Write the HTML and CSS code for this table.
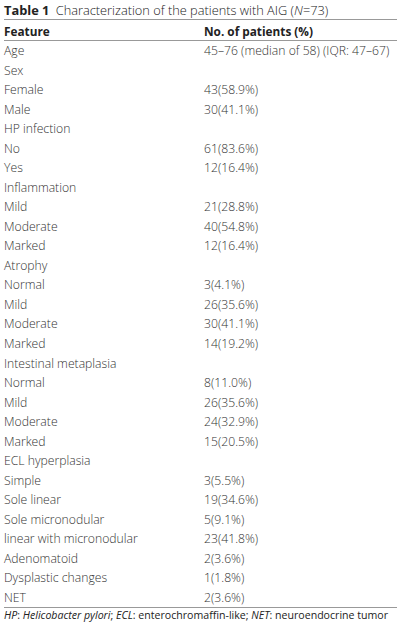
FILE: index.html
```html
<!DOCTYPE html>
<html lang="en">
<head>
    <meta charset="UTF-8">
    <meta name="viewport" content="width=device-width, initial-scale=1.0">
    <title>Table 1</title>
    <link rel="stylesheet" href="styles.css">
</head>
<body>
    <div class="caption"><b>Table 1</b> Characterization of the patients with AIG (<i>N</i>=73)</div>
    <table class="data">
        <thead>
            <tr><th>Feature</th><th>No. of patients (%)</th></tr>
        </thead>
        <tbody>
            <tr><td>Age</td><td>45–76 (median of 58) (IQR: 47–67)</td></tr>
            <tr><td>Sex</td><td></td></tr>
            <tr><td>Female</td><td>43(58.9%)</td></tr>
            <tr><td>Male</td><td>30(41.1%)</td></tr>
            <tr><td>HP infection</td><td></td></tr>
            <tr><td>No</td><td>61(83.6%)</td></tr>
            <tr><td>Yes</td><td>12(16.4%)</td></tr>
            <tr><td>Inflammation</td><td></td></tr>
            <tr><td>Mild</td><td>21(28.8%)</td></tr>
            <tr><td>Moderate</td><td>40(54.8%)</td></tr>
            <tr><td>Marked</td><td>12(16.4%)</td></tr>
            <tr><td>Atrophy</td><td></td></tr>
            <tr><td>Normal</td><td>3(4.1%)</td></tr>
            <tr><td>Mild</td><td>26(35.6%)</td></tr>
            <tr><td>Moderate</td><td>30(41.1%)</td></tr>
            <tr><td>Marked</td><td>14(19.2%)</td></tr>
            <tr><td>Intestinal metaplasia</td><td></td></tr>
            <tr><td>Normal</td><td>8(11.0%)</td></tr>
            <tr><td>Mild</td><td>26(35.6%)</td></tr>
            <tr><td>Moderate</td><td>24(32.9%)</td></tr>
            <tr><td>Marked</td><td>15(20.5%)</td></tr>
            <tr><td>ECL hyperplasia</td><td></td></tr>
            <tr><td>Simple</td><td>3(5.5%)</td></tr>
            <tr><td>Sole linear</td><td>19(34.6%)</td></tr>
            <tr><td>Sole micronodular</td><td>5(9.1%)</td></tr>
            <tr><td>linear with micronodular</td><td>23(41.8%)</td></tr>
            <tr><td>Adenomatoid</td><td>2(3.6%)</td></tr>
            <tr><td>Dysplastic changes</td><td>1(1.8%)</td></tr>
            <tr><td>NET</td><td>2(3.6%)</td></tr>
        </tbody>
    </table>
    <p class="note"><i>HP</i>: <i>Helicobacter pylori</i>; <i>ECL</i>: enterochromaffin-like; <i>NET</i>: neuroendocrine tumor</p>
</body>
</html>
```

FILE: styles.css
```css
body {
    font-family: "Open Sans", sans-serif;
    margin: 0;
    padding: 0 4px;
    color: #333;
    background: #fff;
}
.caption {
    font-size: 12.8px;
    line-height: 18px;
    font-weight: 300;
    color: #222;
    padding-top: 1px;
}
.caption b {
    font-weight: 700;
    margin-right: 3px;
}
.data {
    width: 100%;
    border-collapse: collapse;
    border-top: 1px solid #999;
    border-bottom: 1px solid #999;
    font-size: 12.2px;
}
.data th {
    text-align: left;
    vertical-align: bottom;
    font-size: 11.8px;
    font-weight: 700;
    color: #222;
    height: 19px;
    padding: 0 0 1px;
    border-bottom: 1px solid #999;
}
.data td {
    font-weight: 300;
    height: 19.52px;
    padding: 0;
    white-space: nowrap;
}
.data th:first-child, .data td:first-child {
    width: 200px;
}
.note {
    margin: 0;
    font-size: 10.6px;
    line-height: 13px;
    padding-top: 1px;
    color: #222;
}
```
